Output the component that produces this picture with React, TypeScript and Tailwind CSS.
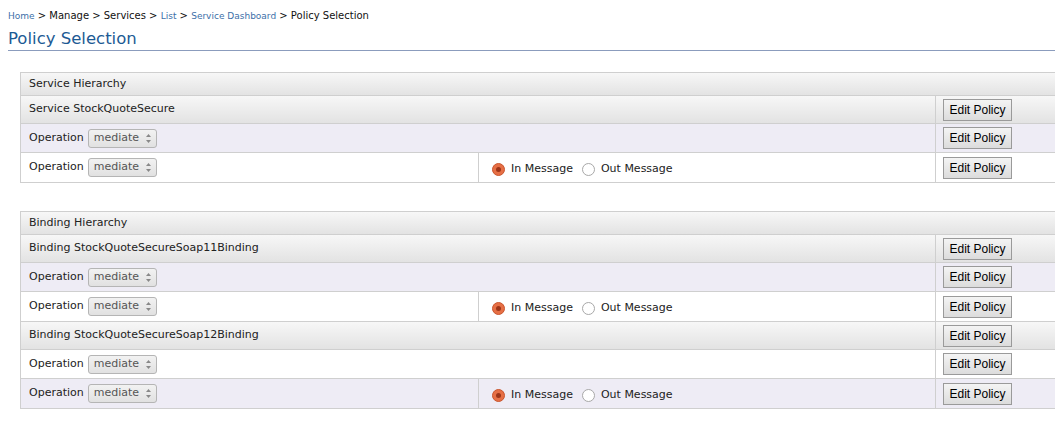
import React from 'react';

type Row =
  | { kind: 'name'; label: string }
  | { kind: 'op'; radio?: boolean; shade?: boolean };

const serviceRows: Row[] = [
  { kind: 'name', label: 'Service StockQuoteSecure' },
  { kind: 'op', shade: true },
  { kind: 'op', radio: true },
];

const bindingRows: Row[] = [
  { kind: 'name', label: 'Binding StockQuoteSecureSoap11Binding' },
  { kind: 'op', shade: true },
  { kind: 'op', radio: true },
  { kind: 'name', label: 'Binding StockQuoteSecureSoap12Binding' },
  { kind: 'op' },
  { kind: 'op', radio: true, shade: true },
];

const EditButton = () => (
  <button className="h-[22px] w-[69px] border border-[#9a9a9a] bg-gradient-to-b from-[#f4f4f4] to-[#dcdcdc] text-[12px] text-black font-['Liberation_Sans',Arial,sans-serif] leading-none">
    Edit Policy
  </button>
);

const FakeSelect = () => (
  <span className="inline-flex items-center h-[19px] w-[69px] rounded-[3px] border border-[#b5b5b5] bg-gradient-to-b from-[#f2f2f2] to-[#e1e1e1] pl-[5px] pr-[4px] align-middle">
    <span className="flex-1 text-[11px] text-[#555]">mediate</span>
    <svg width="7" height="11" viewBox="0 0 7 11">
      <path d="M1 4 L3.5 1 L6 4 Z" fill="#888" />
      <path d="M1 7 L3.5 10 L6 7 Z" fill="#888" />
    </svg>
  </span>
);

const Radio = ({ checked }: { checked?: boolean }) =>
  checked ? (
    <span className="inline-flex items-center justify-center w-[13px] h-[13px] rounded-full bg-[#e66f45] border border-[#c9552d]">
      <span className="w-[5px] h-[5px] rounded-full bg-[#9c3418]" />
    </span>
  ) : (
    <span className="inline-block w-[13px] h-[13px] rounded-full bg-white border border-[#a8a8a8]" />
  );

const Hierarchy = ({ title, rows }: { title: string; rows: Row[] }) => (
  <table className="w-[1050px] border-collapse text-[11px] text-[#222]">
    <tbody>
      <tr className="h-[23px] bg-gradient-to-b from-[#f7f7f7] to-[#e2e2e2]">
        <td colSpan={3} className="border border-[#cfcfcf] pl-[8px]">
          {title}
        </td>
      </tr>
      {rows.map((r, i) => {
        if (r.kind === 'name') {
          return (
            <tr key={i} className="h-[28px] bg-gradient-to-b from-[#f7f7f7] to-[#e2e2e2]">
              <td colSpan={2} className="border border-[#cfcfcf] pl-[8px]">
                {r.label}
              </td>
              <td className="border border-[#cfcfcf] pl-[7px]">
                <EditButton />
              </td>
            </tr>
          );
        }
        const bg = r.shade ? 'bg-[#eeecf5]' : 'bg-white';
        return (
          <tr key={i} className={`${r.radio ? 'h-[30px]' : 'h-[29px]'} ${bg}`}>
            <td colSpan={r.radio ? 1 : 2} className="border border-[#cfcfcf] pl-[8px] w-[458px]">
              <span className="inline-flex items-center gap-[4px]">
                Operation <FakeSelect />
              </span>
            </td>
            {r.radio && (
              <td className="border border-[#cfcfcf] pl-[13px] w-[457px]">
                <span className="inline-flex items-center gap-[6px] pt-[3px]">
                  <Radio checked />
                  <span className="mr-[3px]">In Message</span>
                  <Radio />
                  <span>Out Message</span>
                </span>
              </td>
            )}
            <td className="border border-[#cfcfcf] pl-[7px]">
              <EditButton />
            </td>
          </tr>
        );
      })}
    </tbody>
  </table>
);

export default function App() {
  return (
    <div className="w-[1055px] h-[422px] overflow-hidden bg-white font-['DejaVu_Sans',Verdana,sans-serif]">
      <div className="pl-[8px] pt-[9px] text-[10px] leading-[14px] text-[#111]">
        <span className="text-[9px] text-[#3c6fa8]">Home</span> &gt; Manage &gt; Services &gt;{' '}
        <span className="text-[9px] text-[#3c6fa8]">List</span> &gt;{' '}
        <span className="text-[9px] text-[#3c6fa8]">Service Dashboard</span> &gt; Policy Selection
      </div>
      <h1 className="ml-[8px] mt-[5px] border-b border-[#8b9cbd] text-[16.5px] leading-[22px] text-[#1c5a94] font-normal">
        Policy Selection
      </h1>
      <div className="ml-[20px] mt-[21px]">
        <Hierarchy title="Service Hierarchy" rows={serviceRows} />
      </div>
      <div className="ml-[20px] mt-[28px]">
        <Hierarchy title="Binding Hierarchy" rows={bindingRows} />
      </div>
    </div>
  );
}
